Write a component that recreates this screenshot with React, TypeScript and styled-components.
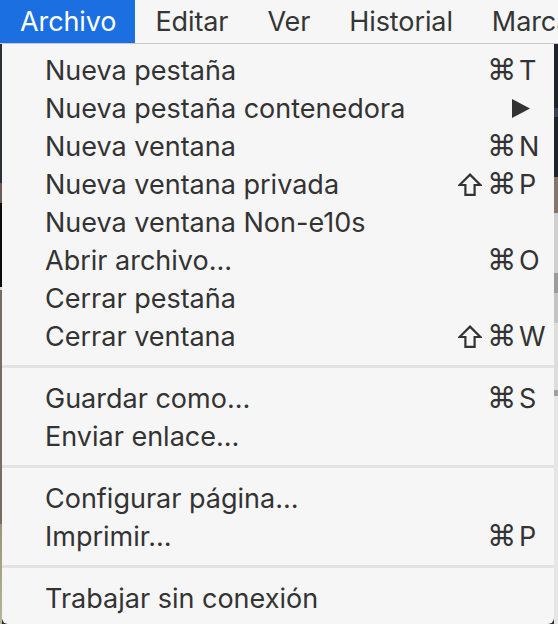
import React from "react";
import styled, { createGlobalStyle } from "styled-components";

const GlobalStyle = createGlobalStyle`
  html, body { margin: 0; padding: 0; }
  body {
    background: #2a2d33;
    font-family: Inter, "Noto Sans", "DejaVu Sans", sans-serif;
    -webkit-font-smoothing: antialiased;
  }
`;

const Screen = styled.div`
  width: 558px;
  height: 624px;
  overflow: hidden;
  display: flex;
  flex-direction: column;
`;

const MenuBar = styled.div`
  height: 43px;
  flex: none;
  display: flex;
  align-items: stretch;
  overflow: hidden;
  background: #f6f6f6;
  border-bottom: 1px solid #c9c9c9;
`;

const MenuTitle = styled.div<{ $active?: boolean }>`
  display: flex;
  align-items: center;
  flex: none;
  padding: 0 19px 1px 20px;
  font-size: 27px;
  letter-spacing: -0.1px;
  white-space: nowrap;
  color: ${(p) => (p.$active ? "#ffffff" : "#353535")};
  background: ${(p) => (p.$active ? "#1b6fe0" : "transparent")};
`;

const Desk = styled.div`
  flex: 1;
  display: flex;
  padding: 0 4px 0 2px;
  background-color: #2a2d33;
  background-image:
    linear-gradient(
      to bottom,
      #2b2e34 0px, #2b2e34 139px,
      #6b5a55 139px, #6b5a55 159px,
      #0b0b0b 159px, #0b0b0b 243px,
      #d8d8d8 243px, #d8d8d8 246px,
      #7a6a62 246px, #7a6a62 480px,
      #9a9478 480px, #b8b59a 580px
    ),
    linear-gradient(
      to bottom,
      #1f242c 0px, #1f242c 64px,
      #3b4350 64px, #3b4350 73px,
      #1f242c 73px, #1f242c 133px,
      #857468 133px, #857468 169px,
      #cfcfcf 169px, #cfcfcf 229px,
      #9c9c9c 229px, #9c9c9c 249px,
      #c4c4c4 249px, #c4c4c4 279px,
      #dddddd 279px, #dddddd 346px,
      #a0a0a0 346px, #a0a0a0 352px,
      #e6e6e6 352px, #e6e6e6 580px
    );
  background-size: 2px 100%, 4px 100%;
  background-position: left top, right top;
  background-repeat: no-repeat;
`;

const Dropdown = styled.div`
  flex: 1;
  display: flex;
  flex-direction: column;
  padding-top: 7px;
  background: #f6f6f6;
  border-radius: 0 0 6px 6px;
`;

const Item = styled.div`
  height: 38px;
  flex: none;
  display: flex;
  align-items: center;
  padding-left: 43px;
  font-size: 27px;
  color: #333333;
  white-space: nowrap;
`;

const Label = styled.span`
  flex: 1;
`;

const Mods = styled.span`
  display: flex;
  align-items: center;
  gap: 5px;
  margin-right: 3px;
`;

const Cmd = styled.span`
  font-family: "DejaVu Sans", sans-serif;
  font-size: 29px;
  line-height: 1;
  color: #333333;
`;

const ShiftIcon = styled.svg`
  width: 24px;
  height: 23px;
  fill: none;
  stroke: #333333;
  stroke-width: 2.2;
  stroke-linejoin: miter;
`;

const Key = styled.span`
  width: 35px;
  font-size: 27px;
  color: #333333;
`;

const Arrow = styled.svg`
  width: 18px;
  height: 19px;
  margin-right: 24px;
  fill: #333333;
`;

const Separator = styled.div`
  height: 3px;
  flex: none;
  margin: 10px 0 11px;
  background: #e3e3e3;
`;

type Mod = "shift" | "cmd";

type Entry =
  | { kind: "item"; label: string; mods?: Mod[]; key?: string; submenu?: boolean }
  | { kind: "sep" };

const entries: Entry[] = [
  { kind: "item", label: "Nueva pestaña", mods: ["cmd"], key: "T" },
  { kind: "item", label: "Nueva pestaña contenedora", submenu: true },
  { kind: "item", label: "Nueva ventana", mods: ["cmd"], key: "N" },
  { kind: "item", label: "Nueva ventana privada", mods: ["shift", "cmd"], key: "P" },
  { kind: "item", label: "Nueva ventana Non-e10s" },
  { kind: "item", label: "Abrir archivo…", mods: ["cmd"], key: "O" },
  { kind: "item", label: "Cerrar pestaña" },
  { kind: "item", label: "Cerrar ventana", mods: ["shift", "cmd"], key: "W" },
  { kind: "sep" },
  { kind: "item", label: "Guardar como…", mods: ["cmd"], key: "S" },
  { kind: "item", label: "Enviar enlace…" },
  { kind: "sep" },
  { kind: "item", label: "Configurar página…" },
  { kind: "item", label: "Imprimir…", mods: ["cmd"], key: "P" },
  { kind: "sep" },
  { kind: "item", label: "Trabajar sin conexión" },
];

const titles = ["Archivo", "Editar", "Ver", "Historial", "Marcadores"];

function ModGlyph({ mod }: { mod: Mod }) {
  if (mod === "shift") {
    return (
      <ShiftIcon viewBox="0 0 24 23">
        <path d="M12 1.6 L22.4 12 H16.6 V21.8 H7.4 V12 H1.6 Z" />
      </ShiftIcon>
    );
  }
  return <Cmd>⌘</Cmd>;
}

export default function App() {
  return (
    <>
      <GlobalStyle />
      <Screen>
        <MenuBar>
          {titles.map((t, i) => (
            <MenuTitle key={t} $active={i === 0}>
              {t}
            </MenuTitle>
          ))}
        </MenuBar>
        <Desk>
          <Dropdown>
            {entries.map((e, i) =>
              e.kind === "sep" ? (
                <Separator key={i} />
              ) : (
                <Item key={i}>
                  <Label>{e.label}</Label>
                  {e.submenu ? (
                    <Arrow viewBox="0 0 18 19">
                      <path d="M0 0 L18 9.5 L0 19 Z" />
                    </Arrow>
                  ) : e.key ? (
                    <>
                      <Mods>
                        {e.mods?.map((m, j) => (
                          <ModGlyph key={j} mod={m} />
                        ))}
                      </Mods>
                      <Key>{e.key}</Key>
                    </>
                  ) : null}
                </Item>
              )
            )}
          </Dropdown>
        </Desk>
      </Screen>
    </>
  );
}
